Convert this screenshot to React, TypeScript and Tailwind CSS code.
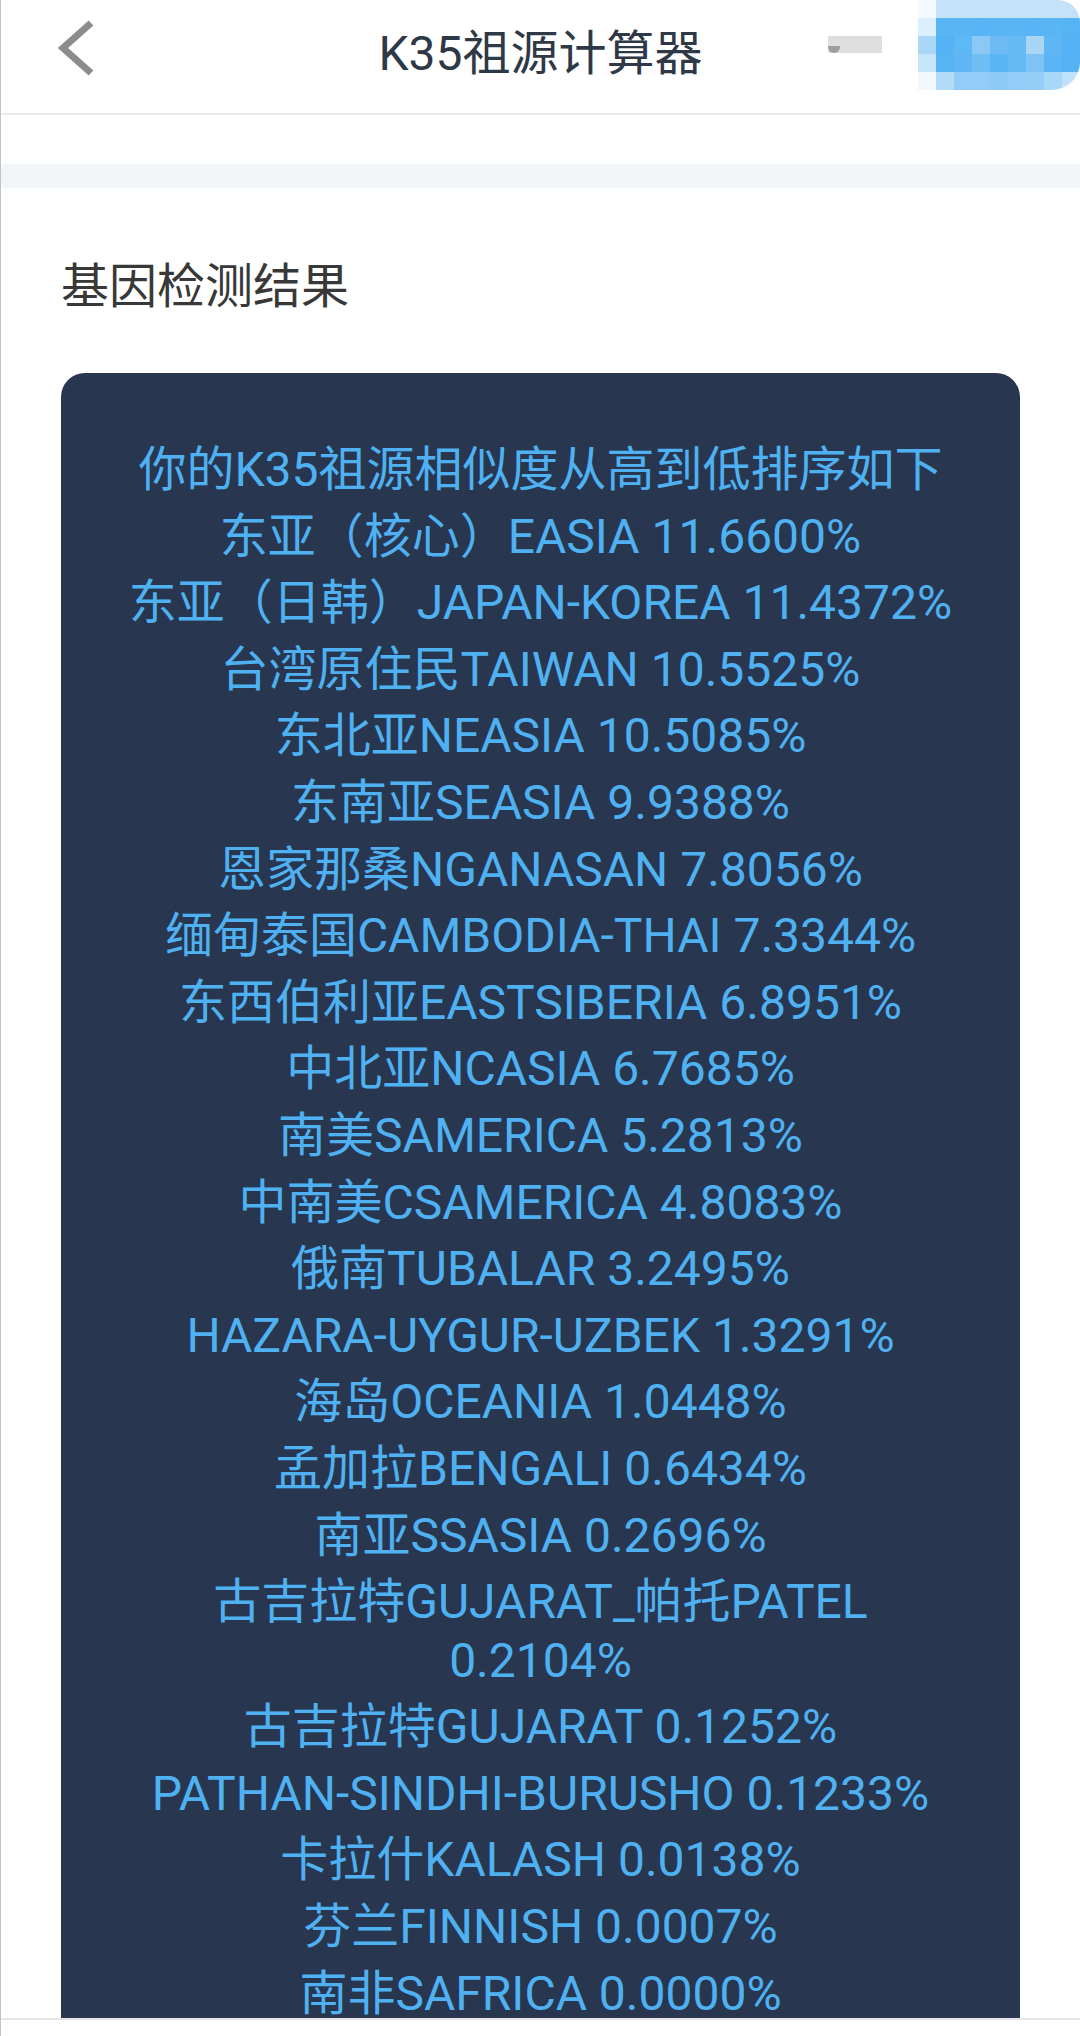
import React from "react";

const lines: string[][] = [
  ["你的K35祖源相似度从高到低排序如下"],
  ["东亚（核心）EASIA 11.6600%"],
  ["东亚（日韩）JAPAN-KOREA 11.4372%"],
  ["台湾原住民TAIWAN 10.5525%"],
  ["东北亚NEASIA 10.5085%"],
  ["东南亚SEASIA 9.9388%"],
  ["恩家那桑NGANASAN 7.8056%"],
  ["缅甸泰国CAMBODIA-THAI 7.3344%"],
  ["东西伯利亚EASTSIBERIA 6.8951%"],
  ["中北亚NCASIA 6.7685%"],
  ["南美SAMERICA 5.2813%"],
  ["中南美CSAMERICA 4.8083%"],
  ["俄南TUBALAR 3.2495%"],
  ["HAZARA-UYGUR-UZBEK 1.3291%"],
  ["海岛OCEANIA 1.0448%"],
  ["孟加拉BENGALI 0.6434%"],
  ["南亚SSASIA 0.2696%"],
  ["古吉拉特GUJARAT_帕托PATEL", "0.2104%"],
  ["古吉拉特GUJARAT 0.1252%"],
  ["PATHAN-SINDHI-BURUSHO 0.1233%"],
  ["卡拉什KALASH 0.0138%"],
  ["芬兰FINNISH 0.0007%"],
  ["南非SAFRICA 0.0000%"],
];

const blobRows: string[][] = [
  ["#f3f9fe", "#c4e3fa", "#c4e3fa", "#c4e3fa", "#c4e3fa", "#c4e3fa", "#c4e3fa", "#c4e3fa", "#c4e3fa"],
  ["#dbeffc", "#5ab5f5", "#5ab5f5", "#58b4f5", "#5ab5f5", "#5ab5f5", "#58b4f5", "#5ab5f5", "#56b3f4"],
  ["#aad7f8", "#55b2f4", "#5eb8f5", "#8cc8f6", "#6cbbf5", "#67b9f5", "#a9d6f5", "#5fb6f5", "#55b2f4"],
  ["#c6e4fa", "#56b3f4", "#60b5f4", "#6fbdf5", "#5bb5f5", "#66b9f5", "#7fc3f5", "#5ab4f5", "#56b2f4"],
  ["#f0f8fe", "#b3dcf8", "#92ccf7", "#92ccf7", "#8fcbf7", "#92ccf7", "#95cdf7", "#a9d7f8", "#bfe1f9"],
];

export default function App() {
  return (
    <div className="w-[1080px] h-[2036px] flex flex-col overflow-hidden bg-white border-l border-[#c4c4c4] font-[Roboto,'Noto_Sans_CJK_SC',sans-serif]">
      {/* Header */}
      <div className="h-[115px] shrink-0 border-b-2 border-[#ebebeb] grid grid-cols-[1fr_auto_1fr]">
        <div className="flex items-start pl-[55px] pt-[20px]">
          <svg width="40" height="56" viewBox="0 0 40 56">
            <polyline points="35,3 7,28 35,53" fill="none" stroke="#8c8c8c" strokeWidth="7" />
          </svg>
        </div>
        <div className="flex items-center pb-[6px] text-[48px] text-[#2f3846] leading-none">K35祖源计算器</div>
        <div className="flex justify-end items-start">
          <div className="mt-[36px] mr-[36px] w-[54px] h-[17px] bg-[#dedede] relative">
            <div className="absolute left-0 bottom-0 w-[12px] h-[7px] rounded-b-full bg-[#9d9d9d]" />
          </div>
          <div className="w-[162px] h-[90px] rounded-tr-[22px] rounded-br-[28px] overflow-hidden flex flex-col">
            {blobRows.map((row, r) => (
              <div key={r} className="flex h-[18px]">
                {row.map((c, i) => (
                  <div key={i} className="w-[18px] h-[18px]" style={{ backgroundColor: c }} />
                ))}
              </div>
            ))}
          </div>
        </div>
      </div>

      <div className="h-[49px] shrink-0" />
      <div className="h-[24px] shrink-0 bg-[#f3f6f9]" />

      {/* Main */}
      <div className="flex-1 min-h-0 overflow-hidden px-[60px] pt-[65px]">
        <div className="h-[67px] leading-[67px] text-[48px] text-[#383838]">基因检测结果</div>
        <div className="mt-[53px] rounded-[24px] bg-[#28374f] pt-[64px] pb-[64px] px-[30px] text-[48px] text-[#4fb1f1]">
          {lines.map((parts, i) =>
            parts.map((p, j) =>
              j === 0 ? (
                <div key={i + "-" + j} className="h-[66.6px] flex items-center justify-center whitespace-nowrap leading-[66.6px]">
                  {p}
                </div>
              ) : (
                <div key={i + "-" + j} className="h-[58.5px] pb-[8.1px] flex items-center justify-center whitespace-nowrap leading-[50px]">
                  {p}
                </div>
              )
            )
          )}
        </div>
      </div>

      <div className="h-[18px] shrink-0 border-t-2 border-[#e6e6e6] bg-white" />
    </div>
  );
}
